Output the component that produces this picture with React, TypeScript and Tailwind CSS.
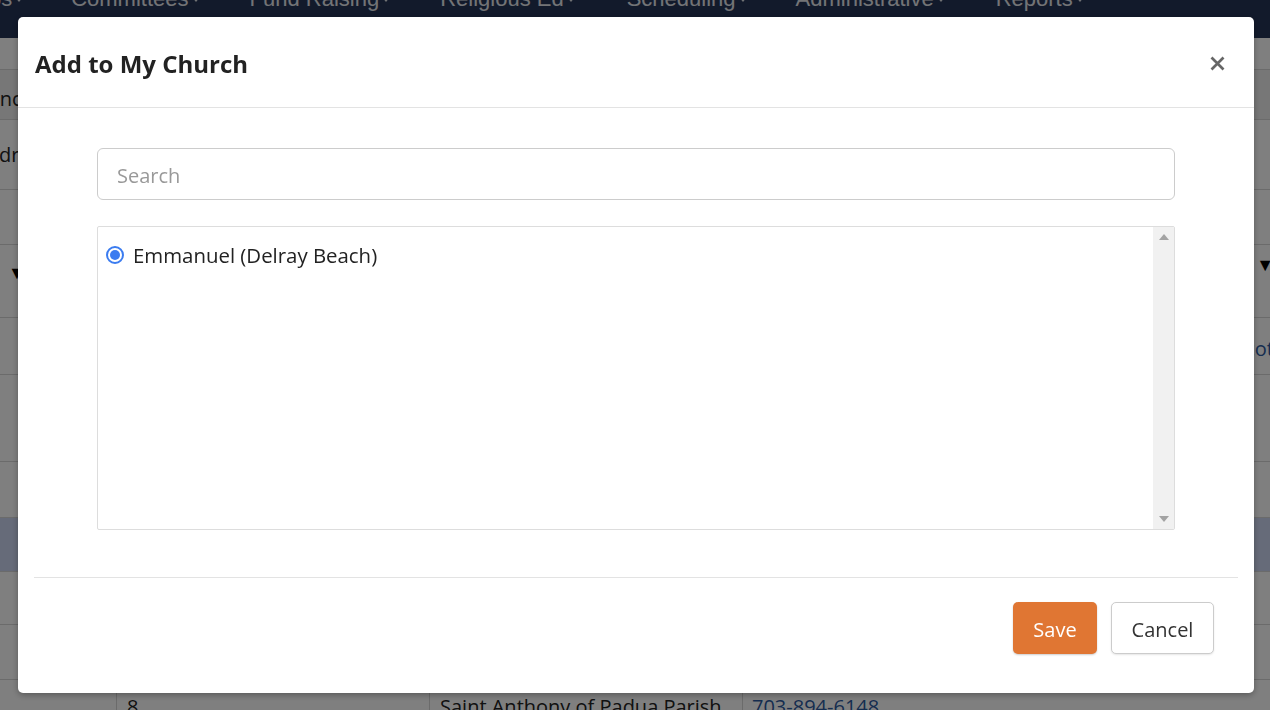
import React from 'react';

const navItems = [
  { label: 'Groups', cls: '-ml-[60px]' },
  { label: 'Committees', cls: 'ml-[48px]' },
  { label: 'Fund Raising', cls: 'ml-[50px]' },
  { label: 'Religious Ed', cls: 'ml-[50px]' },
  { label: 'Scheduling', cls: 'ml-[52px]' },
  { label: 'Administrative', cls: 'ml-[49px]' },
  { label: 'Reports', cls: 'ml-[51px]' },
];

const rows: { h: string; bg?: string; left?: string; leftCls?: string; right?: string; sort?: boolean }[] = [
  { h: 'h-[32px]' },
  { h: 'h-[50px]', bg: 'bg-[#eeeeee]', left: 'Finance', leftCls: '-ml-[39px] pt-[14px]' },
  { h: 'h-[70px]', left: 'Andrew', leftCls: '-ml-[26px] pt-[20px]' },
  { h: 'h-[55px]' },
  { h: 'h-[73px]', sort: true },
  { h: 'h-[57px]', right: 'Scott' },
  { h: 'h-[87px]' },
  { h: 'h-[56px]' },
  { h: 'h-[54px]', bg: 'bg-[#cdd7f2]' },
  { h: 'h-[53px]' },
  { h: 'h-[55px]' },
];

const Caret = () => (
  <svg width="8" height="6" viewBox="0 0 8 6" className="ml-[3px] mt-[2px]">
    <path d="M0 0h8L4 5z" fill="currentColor" />
  </svg>
);

const Background = () => (
  <div className="h-[710px] overflow-hidden bg-white">
    <nav className="h-[38px] bg-[#243457] text-[#e6e8ec] text-[22px] font-['Liberation_Sans',sans-serif] flex items-start overflow-hidden">
      <ul className="flex items-center -mt-[18px] whitespace-nowrap">
        {navItems.map((n) => (
          <li key={n.label} className={`flex items-center ${n.cls}`}>
            {n.label}
            <Caret />
          </li>
        ))}
      </ul>
    </nav>
    {rows.map((r, i) => (
      <div key={i} className={`${r.h} ${r.bg ?? ''} border-b border-[#d6d6d6] flex items-start justify-between text-[20px] text-[#222] whitespace-nowrap`}>
        <div className="flex">
          {r.left && <span className={r.leftCls}>{r.left}</span>}
          {r.sort && <span className="ml-[8px] mt-[14px] text-[18px] text-black">▼</span>}
        </div>
        {r.right && <span className="text-[#2c5aa0] -mr-[11px] pt-[16px]">{r.right}</span>}
        {r.sort && <span className="-mr-[4px] mt-[6px] text-[18px] text-black">▼</span>}
      </div>
    ))}
    <div className="grid grid-cols-[117px_313px_313px_1fr] text-[20px] text-[#222] whitespace-nowrap">
      <div className="border-r border-[#d6d6d6] h-[40px]" />
      <div className="border-r border-[#d6d6d6] pl-[10px] pt-[12px]">8</div>
      <div className="border-r border-[#d6d6d6] pl-[10px] pt-[12px]">Saint Anthony of Padua Parish</div>
      <div className="pl-[9px] pt-[12px] text-[#2c5aa0]">703-894-6148</div>
    </div>
  </div>
);

const Scrollbar = () => (
  <div className="w-[21px] bg-[#f1f1f1] flex flex-col items-center justify-between py-[7px]">
    <svg width="10" height="6" viewBox="0 0 10 6">
      <path d="M0 6L5 0l5 6z" fill="#a3a3a3" />
    </svg>
    <svg width="10" height="6" viewBox="0 0 10 6">
      <path d="M0 0h10L5 6z" fill="#a3a3a3" />
    </svg>
  </div>
);

export default function App() {
  return (
    <div className="relative font-['Open_Sans',sans-serif]">
      <Background />
      <div className="fixed inset-0 bg-black/50" />
      <div className="fixed left-[18px] top-[17px] w-[1236px] h-[676px] bg-white rounded-[5px] flex flex-col shadow-[0_2px_6px_rgba(0,0,0,0.3)]">
        <div className="h-[91px] border-b border-[#e3e3e3] flex items-center justify-between pl-[17px] pr-[28px] pt-[3px]">
          <h4 className="text-[24px] font-bold text-[#222]">Add to My Church</h4>
          <button className="text-[#666]">
            <svg width="17" height="17" viewBox="0 0 17 17">
              <path d="M2.5 2.5l12 12M14.5 2.5l-12 12" stroke="currentColor" strokeWidth="2.7" />
            </svg>
          </button>
        </div>
        <div className="px-[79px] pt-[40px]">
          <input
            placeholder="Search"
            className="w-full h-[52px] border border-[#cccccc] rounded-[6px] px-[19px] pt-[2px] text-[20px] text-[#333] placeholder:text-[#999] outline-none"
          />
          <div className="mt-[26px] h-[304px] border border-[#dddddd] rounded-[2px] flex">
            <div className="flex-1 pl-[8px] pt-[13px]">
              <label className="flex items-center gap-[9px] text-[20.4px] text-[#222]">
                <span className="w-[18px] h-[18px] rounded-full border-2 border-[#3b7cf0] flex items-center justify-center">
                  <span className="w-[10px] h-[10px] rounded-full bg-[#3b7cf0]" />
                </span>
                Emmanuel (Delray Beach)
              </label>
            </div>
            <Scrollbar />
          </div>
        </div>
        <div className="mx-[16px] mt-[47px] border-t border-[#e3e3e3]" />
        <div className="flex justify-end gap-[14px] pt-[24px] pr-[40px]">
          <button className="w-[84px] h-[52px] rounded-[5px] bg-[#e07633] text-white text-[20px] pt-[3px] shadow-[0_1px_2px_rgba(0,0,0,0.2)]">
            Save
          </button>
          <button className="w-[103px] h-[52px] rounded-[5px] bg-white border border-[#cccccc] text-[#333] text-[20px] pt-[3px] shadow-[0_1px_2px_rgba(0,0,0,0.1)]">
            Cancel
          </button>
        </div>
      </div>
    </div>
  );
}
